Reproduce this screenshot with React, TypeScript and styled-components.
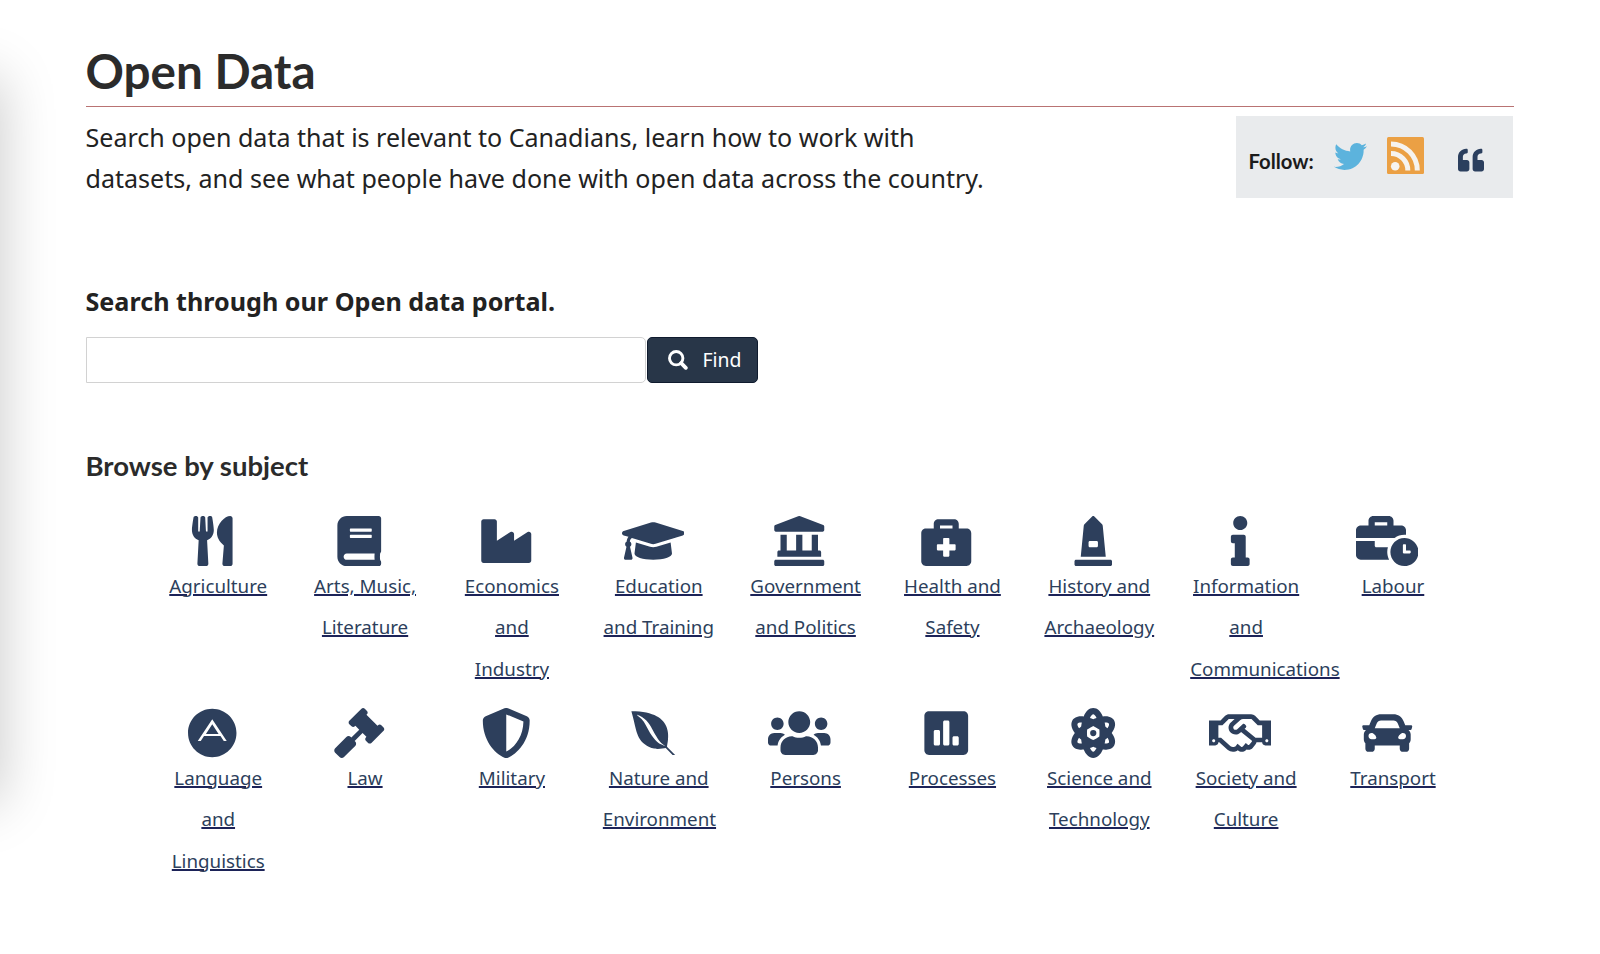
import styled, { createGlobalStyle } from "styled-components";
import type { ComponentType } from "react";
import {
  FaAdn,
  FaBook,
  FaBriefcaseMedical,
  FaBusinessTime,
  FaCar,
  FaEnvira,
  FaGavel,
  FaGraduationCap,
  FaIndustry,
  FaInfo,
  FaLandmark,
  FaMonument,
  FaPoll,
  FaQuoteLeft,
  FaRegHandshake,
  FaShieldAlt,
  FaTwitter,
  FaUsers,
  FaUtensils,
} from "react-icons/fa";

const GlobalStyle = createGlobalStyle`
  * {
    box-sizing: border-box;
  }
  body {
    margin: 0;
    background: #fff;
    color: #2b2b2b;
    font-family: "Noto Sans", sans-serif;
    overflow: hidden;
  }
`;

const Page = styled.div`
  position: relative;
  height: 954px;
  padding: 42px 86px 0 85.5px;
  overflow: hidden;
`;

// shadow cast by the panel that sits past the left edge
const EdgeShadow = styled.div`
  position: absolute;
  left: -60px;
  top: 78px;
  width: 60px;
  height: 724px;
  box-shadow: 0 0 56px rgba(0, 0, 0, 0.22);
`;

const Title = styled.h1`
  margin: 0;
  height: 65px;
  border-bottom: 1px solid #b97373;
  font-family: Lato, sans-serif;
  font-size: 47.6px;
  font-weight: 700;
  line-height: 57px;
`;

const Intro = styled.div`
  display: flex;
  justify-content: space-between;
  height: 174px;

  p {
    width: 920px;
    margin: 10px 0 0;
    color: #222;
    font-size: 25.06px;
    line-height: 41.4px;
  }
`;

const FollowBox = styled.div`
  display: flex;
  width: 277px;
  height: 82px;
  margin: 9.4px 1px 0 0;
  padding-left: 12.5px;
  background: #e9ebed;
`;

const FollowLabel = styled.span`
  width: 85px;
  margin-top: 31.4px;
  color: #1b1b1b;
  font-family: Lato, sans-serif;
  font-size: 20.3px;
  font-weight: 700;
  line-height: 26px;
`;

const FollowIcon = styled.a<{ $top: number; $gap: number; $color: string }>`
  height: 38px;
  margin: ${(p) => p.$top}px ${(p) => p.$gap}px 0 0;
  color: ${(p) => p.$color};

  svg {
    display: block;
  }
`;

const SearchTitle = styled.h2`
  margin: 0;
  height: 56px;
  color: #222;
  font-size: 25.15px;
  font-weight: 700;
  line-height: 41.4px;
`;

const SearchForm = styled.form`
  display: flex;
  gap: 1.5px;
  height: 46px;
`;

const SearchInput = styled.input`
  width: 560px;
  height: 46px;
  border: 1px solid #d2d2d2;
  border-radius: 0 5px 5px 0;
  outline: none;
`;

const FindButton = styled.button`
  display: flex;
  align-items: center;
  gap: 15px;
  width: 110.5px;
  height: 46px;
  padding: 0 0 1px 19.5px;
  border: 1px solid #0f1b2e;
  border-radius: 5px;
  background: #283648;
  color: #fff;
  font-family: "Noto Sans", sans-serif;
  font-size: 19.4px;
`;

const BrowseTitle = styled.h2`
  margin: 62px 0 0;
  height: 71px;
  font-family: Lato, sans-serif;
  font-size: 27.5px;
  font-weight: 700;
  line-height: 42px;
`;

const Subjects = styled.ul`
  display: grid;
  grid-template-columns: repeat(9, 146.85px);
  grid-auto-rows: 192px;
  margin: 0 0 0 59.3px;
  padding: 0;
  list-style: none;
`;

const Subject = styled.li`
  padding: 0 17.5px;
  text-align: center;

  a {
    display: block;
    color: #2d3f5c;
    font-size: 18.78px;
    line-height: 41.4px;
    text-decoration: none;
  }
  span {
    text-decoration: underline #1c2358;
    text-decoration-thickness: 1.5px;
  }
`;

const SubjectIcon = styled.div`
  display: flex;
  justify-content: center;
  height: 49.8px;
  margin-right: 12px;

  svg {
    flex: none;
    width: 62.5px;
    height: 50px;
  }
`;

const RssIcon = () => (
  <svg width="37" height="37" viewBox="0 0 37 37">
    <rect width="37" height="37" rx="1.5" fill="#eba044" />
    <circle cx="8.2" cy="29.3" r="4.3" fill="#f6f3ef" />
    <path
      d="M4 16.5a16.8 16.8 0 0 1 16.8 17M4 7a26.3 26.3 0 0 1 26.3 26.5"
      fill="none"
      stroke="#f6f3ef"
      strokeWidth="5"
    />
  </svg>
);

const SearchIcon = () => (
  <svg width="20" height="20" viewBox="0 0 20 20" fill="none" stroke="#fff">
    <circle cx="8.2" cy="8.2" r="6.7" strokeWidth="2.9" />
    <path d="M13.2 13.2l4.6 4.6" strokeWidth="3.8" strokeLinecap="round" />
  </svg>
);

const AtomIcon = () => (
  <svg viewBox="0 0 448 512" fill="currentColor">
    <path d="M413.03 256c40.13-54.89 41.51-98.62 25.14-128-10.91-19.52-40.54-50.73-116.33-41.88C300.36 34.89 267.64 0 224 0s-76.36 34.89-97.84 86.12C50.43 77.34 20.73 108.48 9.83 128c-16.38 29.4-15 73.09 25.14 128-40.13 54.89-41.51 98.62-25.14 128 29.13 52.34 101.6 43.58 116.33 41.88C147.63 477.1 180.36 512 224 512s76.37-34.9 97.84-86.12c14.64 1.69 87.2 10.45 116.34-41.88 16.37-29.4 14.98-73.11-25.15-128zM63.38 352c-4.03-7.21-.19-24.8 14.95-48.29 6.96 6.53 14.2 12.89 21.87 19.18 1.71 13.71 4 27.08 6.76 40.08-24.56.89-39.89-4.37-43.58-10.97zm36.82-162.88c-7.66 6.29-14.9 12.65-21.87 19.18-15.13-23.5-18.97-41.09-14.95-48.3 3.41-6.14 16.39-11.47 37.92-11.47 1.71 0 3.87.3 5.69.37a472.191 472.191 0 0 0-6.79 40.22zM224 64c9.47 0 22.2 13.52 33.86 37.26-11.19 3.7-22.44 8-33.86 12.86-11.42-4.86-22.67-9.16-33.86-12.86C201.8 77.52 214.53 64 224 64zm0 384c-9.47 0-22.2-13.52-33.86-37.26 11.19-3.7 22.44-8 33.86-12.86 11.42 4.86 22.67 9.16 33.86 12.86C246.2 434.48 233.47 448 224 448zm62.5-157.33c-26.7 19.08-46.14 29.33-62.5 37.48-16.35-8.14-35.8-18.41-62.5-37.48-1.99-27.79-1.99-41.54 0-69.33 26.67-19.05 46.13-29.32 62.5-37.48 16.39 8.17 35.86 18.44 62.5 37.48 1.98 27.78 1.99 41.53 0 69.33zm98.12 61.33c-3.7 6.61-19.05 11.88-43.58 10.97 2.76-13 5.05-26.37 6.76-40.08 7.67-6.29 14.91-12.65 21.87-19.18 15.13 23.49 18.98 41.08 14.95 48.29zM369.67 208.3c-6.96-6.53-14.2-12.89-21.87-19.18-1.71-13.74-4.02-27.21-6.79-40.22 1.82-.07 3.98-.37 5.69-.37 21.53 0 34.51 5.33 37.92 11.47 4.03 7.21.19 24.8-14.95 48.3zM224 224a32 32 0 1 0 0 64 32 32 0 1 0 0-64z" />
  </svg>
);

const subjects: { name: string; icon: ComponentType }[] = [
  { name: "Agriculture", icon: FaUtensils },
  { name: "Arts, Music, Literature", icon: FaBook },
  { name: "Economics and Industry", icon: FaIndustry },
  { name: "Education and Training", icon: FaGraduationCap },
  { name: "Government and Politics", icon: FaLandmark },
  { name: "Health and Safety", icon: FaBriefcaseMedical },
  { name: "History and Archaeology", icon: FaMonument },
  { name: "Information and Communications", icon: FaInfo },
  { name: "Labour", icon: FaBusinessTime },
  { name: "Language and Linguistics", icon: FaAdn },
  { name: "Law", icon: FaGavel },
  { name: "Military", icon: FaShieldAlt },
  { name: "Nature and Environment", icon: FaEnvira },
  { name: "Persons", icon: FaUsers },
  { name: "Processes", icon: FaPoll },
  { name: "Science and Technology", icon: AtomIcon },
  { name: "Society and Culture", icon: FaRegHandshake },
  { name: "Transport", icon: FaCar },
];

export default function App() {
  return (
    <>
      <GlobalStyle />
      <Page>
        <EdgeShadow />
        <Title>Open Data</Title>
        <Intro>
          <p>
            Search open data that is relevant to Canadians, learn how to work with
            datasets, and see what people have done with open data across the country.
          </p>
          <FollowBox>
            <FollowLabel>Follow:</FollowLabel>
            <FollowIcon $top={23.5} $gap={20} $color="#5cb3dd">
              <FaTwitter size={33} />
            </FollowIcon>
            <FollowIcon $top={20.5} $gap={34.8} $color="#eba044">
              <RssIcon />
            </FollowIcon>
            <FollowIcon $top={30.5} $gap={0} $color="#2b3f5e">
              <FaQuoteLeft size={26} />
            </FollowIcon>
          </FollowBox>
        </Intro>
        <SearchTitle>Search through our Open data portal.</SearchTitle>
        <SearchForm>
          <SearchInput type="text" />
          <FindButton type="button">
            <SearchIcon />
            Find
          </FindButton>
        </SearchForm>
        <BrowseTitle>Browse by subject</BrowseTitle>
        <Subjects>
          {subjects.map(({ name, icon: Icon }) => (
            <Subject key={name}>
              <a>
                <SubjectIcon>
                  <Icon />
                </SubjectIcon>
                <span>{name}</span>
              </a>
            </Subject>
          ))}
        </Subjects>
      </Page>
    </>
  );
}
